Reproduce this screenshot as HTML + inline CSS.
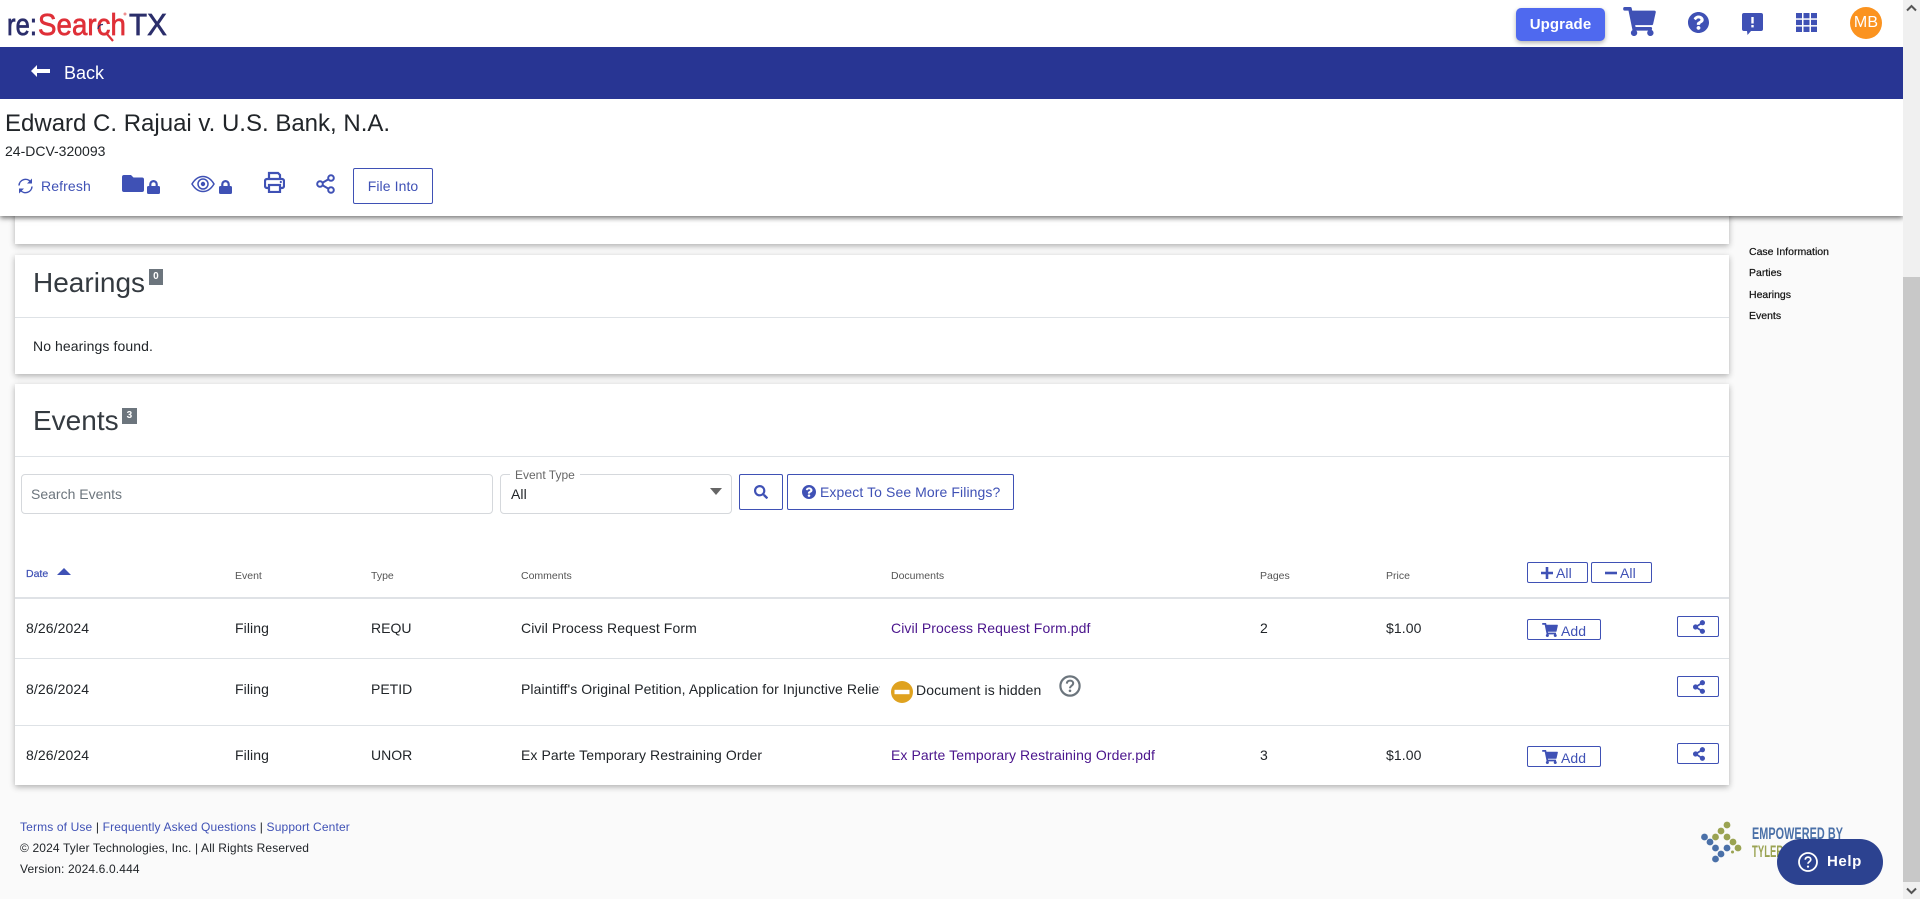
<!DOCTYPE html>
<html lang="en">
<head>
<meta charset="utf-8">
<title>re:SearchTX</title>
<style>
html,body{margin:0;padding:0;width:1920px;height:899px;overflow:hidden;background:#fafafa;font-family:"Liberation Sans",Arial,sans-serif;color:#212529;font-size:14px;letter-spacing:.09px}
div,span,a,svg{position:absolute;display:block}
a{text-decoration:none}
.t{line-height:20px;white-space:nowrap}
.card{background:#fff;left:15px;width:1714px;box-shadow:0 2px 6px rgba(0,0,0,.3)}
.line{left:15px;width:1714px;height:1px;background:#dee2e6}
.btn{box-sizing:border-box;border:1px solid #3f51b5;border-radius:2px;background:#fff;color:#3f51b5}
.th{font-size:10.5px;color:#555;line-height:14px;white-space:nowrap;letter-spacing:0}
.doc{color:#4a148c}
.blue{color:#3f51b5}
.small{font-size:12px;letter-spacing:.14px}
.nav{left:1749px;font-size:10.5px;line-height:14px;color:#111;white-space:nowrap;-webkit-text-stroke:.2px #111;letter-spacing:0}
</style>
</head>
<body>
<!-- right rail nav -->
<span class="nav" style="top:245px">Case Information</span>
<span class="nav" style="top:266px">Parties</span>
<span class="nav" style="top:288px">Hearings</span>
<span class="nav" style="top:309px">Events</span>

<!-- partial card -->
<div class="card" style="top:200px;height:44px"></div>

<!-- Hearings -->
<div class="card" style="top:255px;height:119px"></div>
<div class="t" style="left:33px;top:263px;font-size:28px;line-height:40px;color:#343a40;letter-spacing:0">Hearings</div>
<div style="left:149px;top:269px;width:14px;height:16px;background:#6c757d;color:#fff;font-size:10px;font-weight:bold;text-align:center;line-height:16px">0</div>
<div class="line" style="top:317px"></div>
<div class="t" style="left:33px;top:336px">No hearings found.</div>

<!-- Events -->
<div class="card" style="top:384px;height:401px"></div>
<div class="t" style="left:33px;top:401px;font-size:28px;line-height:40px;color:#343a40;letter-spacing:0">Events</div>
<div style="left:122px;top:408px;width:15px;height:16px;background:#6c757d;color:#fff;font-size:10px;font-weight:bold;text-align:center;line-height:16px">3</div>
<div class="line" style="top:456px"></div>

<div style="left:21px;top:474px;width:472px;height:40px;box-sizing:border-box;border:1px solid #d5d8dc;border-radius:4px"></div>
<div class="t" style="left:31px;top:484px;color:#6c757d;letter-spacing:0">Search Events</div>
<div style="left:500px;top:474px;width:232px;height:40px;box-sizing:border-box;border:1px solid #d5d8dc;border-radius:4px"></div>
<div class="t" style="left:510px;top:465px;padding:0 5px;background:#fff;font-size:12px;color:#666;letter-spacing:0">Event Type</div>
<div class="t" style="left:511px;top:484px">All</div>
<svg style="left:710px;top:488px" width="12" height="7" viewBox="0 0 12 7"><path d="M0 0h12L6 7z" fill="#666"/></svg>

<div class="btn" style="left:739px;top:474px;width:44px;height:36px">
<svg style="left:14px;top:10px" width="14" height="14" viewBox="0 0 512 512"><path fill="#3f51b5" d="M505 442.7L405.3 343c-4.5-4.5-10.6-7-17-7H372c27.6-35.3 44-79.7 44-128C416 93.1 322.9 0 208 0S0 93.1 0 208s93.1 208 208 208c48.3 0 92.7-16.4 128-44v16.3c0 6.4 2.5 12.5 7 17l99.7 99.7c9.4 9.4 24.6 9.4 33.9 0l28.3-28.3c9.4-9.4 9.4-24.6.1-34zM208 336c-70.7 0-128-57.2-128-128 0-70.7 57.2-128 128-128 70.7 0 128 57.2 128 128 0 70.7-57.2 128-128 128z"/></svg>
</div>
<div class="btn" style="left:787px;top:474px;width:227px;height:36px">
<svg style="left:14px;top:10px" width="14" height="14" viewBox="8 8 496 496"><path fill="#3f51b5" d="M504 256c0 136.997-111.043 248-248 248S8 392.997 8 256C8 119.083 119.043 8 256 8s248 111.083 248 248zM262.655 90c-54.497 0-89.255 22.957-116.549 63.758-3.536 5.286-2.353 12.415 2.715 16.258l34.699 26.31c5.205 3.947 12.621 3.008 16.665-2.122 17.864-22.658 30.113-35.797 57.303-35.797 20.429 0 45.698 13.148 45.698 32.958 0 14.976-12.363 22.667-32.534 33.976C247.128 238.528 216 254.941 216 296v4c0 6.627 5.373 12 12 12h56c6.627 0 12-5.373 12-12v-1.333c0-28.462 83.186-29.647 83.186-106.667 0-58.002-60.165-102-116.531-102zM256 338c-25.365 0-46 20.635-46 46 0 25.364 20.635 46 46 46s46-20.636 46-46c0-25.365-20.635-46-46-46z"/></svg>
<span class="t" style="left:32px;top:7px;color:#3f51b5">Expect To See More Filings?</span>
</div>

<!-- table head -->
<a class="th" style="left:26px;top:567px;color:#3f51b5;-webkit-text-stroke:.2px #3f51b5">Date</a>
<svg style="left:57px;top:568px" width="14" height="7" viewBox="0 0 14 7"><path d="M0 7h14L7 0z" fill="#3f51b5"/></svg>
<span class="th" style="left:235px;top:569px">Event</span>
<span class="th" style="left:371px;top:569px">Type</span>
<span class="th" style="left:521px;top:569px">Comments</span>
<span class="th" style="left:891px;top:569px">Documents</span>
<span class="th" style="left:1260px;top:569px">Pages</span>
<span class="th" style="left:1386px;top:569px">Price</span>
<div class="btn" style="left:1527px;top:562px;width:61px;height:21px">
<svg style="left:13px;top:4px" width="12" height="12" viewBox="0 0 12 12"><path d="M6 0v12M0 6h12" stroke="#3f51b5" stroke-width="2.6"/></svg>
<span class="t" style="left:28px;top:0">All</span>
</div>
<div class="btn" style="left:1591px;top:562px;width:61px;height:21px">
<svg style="left:13px;top:4px" width="12" height="12" viewBox="0 0 12 12"><path d="M0 6h12" stroke="#3f51b5" stroke-width="2.6"/></svg>
<span class="t" style="left:28px;top:0">All</span>
</div>
<div class="line" style="top:597px;height:2px;background:#dfe2e6"></div>

<!-- rows -->
<span class="t" style="left:26px;top:618px">8/26/2024</span>
<span class="t" style="left:235px;top:618px">Filing</span>
<span class="t" style="left:371px;top:618px;letter-spacing:0">REQU</span>
<span class="t" style="left:521px;top:618px">Civil Process Request Form</span>
<a class="t doc" style="left:891px;top:618px">Civil Process Request Form.pdf</a>
<span class="t" style="left:1260px;top:618px">2</span>
<span class="t" style="left:1386px;top:618px">$1.00</span>
<div class="btn" style="left:1527px;top:619px;width:74px;height:21px">
<svg style="left:14px;top:3px" width="16" height="14" viewBox="0 0 576 512"><path fill="#3f51b5" d="M528.12 301.319l47.273-208C578.806 78.301 567.391 64 551.99 64H159.208l-9.166-44.81C147.758 8.021 137.93 0 126.529 0H24C10.745 0 0 10.745 0 24v16c0 13.255 10.745 24 24 24h69.883l70.248 343.435C147.325 417.1 136 435.222 136 456c0 30.928 25.072 56 56 56s56-25.072 56-56c0-15.674-6.447-29.835-16.824-40h209.647C430.447 426.165 424 440.326 424 456c0 30.928 25.072 56 56 56s56-25.072 56-56c0-22.172-12.888-41.332-31.579-50.405l5.517-24.276c3.413-15.018-8.002-29.319-23.403-29.319H218.117l-6.545-32h293.145c11.206 0 20.92-7.754 23.403-18.681z"/></svg>
<span class="t" style="left:33px;top:1px">Add</span>
</div>
<div class="btn" style="left:1677px;top:616px;width:42px;height:21px">
<svg style="left:15px;top:3px" width="12" height="14" viewBox="0 0 448 512"><path fill="#3f51b5" d="M352 320c-22.608 0-43.387 7.819-59.79 20.895l-102.486-64.054a96.551 96.551 0 0 0 0-41.683l102.486-64.054C308.613 184.181 329.392 192 352 192c53.019 0 96-42.981 96-96S405.019 0 352 0s-96 42.981-96 96c0 7.158.79 14.13 2.276 20.841L155.79 180.895C139.387 167.819 118.608 160 96 160c-53.019 0-96 42.981-96 96s42.981 96 96 96c22.608 0 43.387-7.819 59.79-20.895l102.486 64.054A96.301 96.301 0 0 0 256 416c0 53.019 42.981 96 96 96s96-42.981 96-96-42.981-96-96-96z"/></svg>
</div>
<div class="line" style="top:658px"></div>

<span class="t" style="left:26px;top:679px">8/26/2024</span>
<span class="t" style="left:235px;top:679px">Filing</span>
<span class="t" style="left:371px;top:679px;letter-spacing:0">PETID</span>
<span class="t" style="left:521px;top:679px;width:359px;overflow:hidden">Plaintiff's Original Petition, Application for Injunctive Relief and Request for Disclosure</span>
<svg style="left:891px;top:681px" width="22" height="22" viewBox="0 0 22 22"><circle cx="11" cy="11" r="11" fill="#dfa21f"/><rect x="3.5" y="8.8" width="15" height="4.4" fill="#fff"/></svg>
<span class="t" style="left:916px;top:680px">Document is hidden</span>
<svg style="left:1059px;top:675px" width="22" height="22" viewBox="0 0 22 22"><circle cx="11" cy="11" r="9.6" fill="none" stroke="#6c757d" stroke-width="2.2"/><path d="M7.8 8.6c.2-2 1.6-3 3.3-3 1.8 0 3.1 1.1 3.1 2.7 0 2.500-3.200 2.400-3.200 4.900" fill="none" stroke="#6c757d" stroke-width="2"/><circle cx="11" cy="15.800" r="1.300" fill="#6c757d"/></svg>
<div class="btn" style="left:1677px;top:676px;width:42px;height:21px">
<svg style="left:15px;top:3px" width="12" height="14" viewBox="0 0 448 512"><path fill="#3f51b5" d="M352 320c-22.608 0-43.387 7.819-59.79 20.895l-102.486-64.054a96.551 96.551 0 0 0 0-41.683l102.486-64.054C308.613 184.181 329.392 192 352 192c53.019 0 96-42.981 96-96S405.019 0 352 0s-96 42.981-96 96c0 7.158.79 14.13 2.276 20.841L155.79 180.895C139.387 167.819 118.608 160 96 160c-53.019 0-96 42.981-96 96s42.981 96 96 96c22.608 0 43.387-7.819 59.79-20.895l102.486 64.054A96.301 96.301 0 0 0 256 416c0 53.019 42.981 96 96 96s96-42.981 96-96-42.981-96-96-96z"/></svg>
</div>
<div class="line" style="top:725px"></div>

<span class="t" style="left:26px;top:745px">8/26/2024</span>
<span class="t" style="left:235px;top:745px">Filing</span>
<span class="t" style="left:371px;top:745px;letter-spacing:0">UNOR</span>
<span class="t" style="left:521px;top:745px">Ex Parte Temporary Restraining Order</span>
<a class="t doc" style="left:891px;top:745px">Ex Parte Temporary Restraining Order.pdf</a>
<span class="t" style="left:1260px;top:745px">3</span>
<span class="t" style="left:1386px;top:745px">$1.00</span>
<div class="btn" style="left:1527px;top:746px;width:74px;height:21px">
<svg style="left:14px;top:3px" width="16" height="14" viewBox="0 0 576 512"><path fill="#3f51b5" d="M528.12 301.319l47.273-208C578.806 78.301 567.391 64 551.99 64H159.208l-9.166-44.81C147.758 8.021 137.93 0 126.529 0H24C10.745 0 0 10.745 0 24v16c0 13.255 10.745 24 24 24h69.883l70.248 343.435C147.325 417.1 136 435.222 136 456c0 30.928 25.072 56 56 56s56-25.072 56-56c0-15.674-6.447-29.835-16.824-40h209.647C430.447 426.165 424 440.326 424 456c0 30.928 25.072 56 56 56s56-25.072 56-56c0-22.172-12.888-41.332-31.579-50.405l5.517-24.276c3.413-15.018-8.002-29.319-23.403-29.319H218.117l-6.545-32h293.145c11.206 0 20.92-7.754 23.403-18.681z"/></svg>
<span class="t" style="left:33px;top:1px">Add</span>
</div>
<div class="btn" style="left:1677px;top:743px;width:42px;height:21px">
<svg style="left:15px;top:3px" width="12" height="14" viewBox="0 0 448 512"><path fill="#3f51b5" d="M352 320c-22.608 0-43.387 7.819-59.79 20.895l-102.486-64.054a96.551 96.551 0 0 0 0-41.683l102.486-64.054C308.613 184.181 329.392 192 352 192c53.019 0 96-42.981 96-96S405.019 0 352 0s-96 42.981-96 96c0 7.158.79 14.13 2.276 20.841L155.79 180.895C139.387 167.819 118.608 160 96 160c-53.019 0-96 42.981-96 96s42.981 96 96 96c22.608 0 43.387-7.819 59.79-20.895l102.486 64.054A96.301 96.301 0 0 0 256 416c0 53.019 42.981 96 96 96s96-42.981 96-96-42.981-96-96-96z"/></svg>
</div>

<!-- footer -->
<div class="t small" style="left:20px;top:817px"><a style="position:static;display:inline;color:#3f51b5">Terms of Use</a> | <a style="position:static;display:inline;color:#3f51b5">Frequently Asked Questions</a> | <a style="position:static;display:inline;color:#3f51b5">Support Center</a></div>
<div class="t small" style="left:20px;top:838px">© 2024 Tyler Technologies, Inc. | All Rights Reserved</div>
<div class="t small" style="left:20px;top:859px">Version: 2024.6.0.444</div>

<!-- empowered logo -->
<svg style="left:1660px;top:810px" width="260" height="89" viewBox="0 0 260 89">
<g fill="#9aa352"><circle cx="67" cy="15" r="3.400"/><circle cx="61" cy="21" r="3.400"/><circle cx="55.500" cy="27" r="3.400"/><circle cx="67" cy="27" r="3.400"/><circle cx="73" cy="32" r="3.400"/><circle cx="78" cy="38" r="3.400"/><circle cx="72.500" cy="42" r="1.500"/></g>
<g fill="#4a70a8"><circle cx="44.500" cy="27" r="3.400"/><circle cx="50" cy="32" r="3.400"/><circle cx="55.500" cy="38" r="3.400"/><circle cx="67" cy="38" r="3.400"/><circle cx="61" cy="44" r="3.400"/><circle cx="55.500" cy="49" r="3.400"/></g>
<text x="92" y="29" font-family="Liberation Sans" font-size="17" font-weight="bold" fill="#4a70a8" textLength="91" lengthAdjust="spacingAndGlyphs">EMPOWERED BY</text>
<text x="92" y="47" font-family="Liberation Sans" font-size="17" font-weight="bold" fill="#9aa352" textLength="60" lengthAdjust="spacingAndGlyphs">TYLER TECH</text>
</svg>

<!-- help button -->
<div style="left:1777px;top:839px;width:106px;height:46px;border-radius:23px;background:#2c4290">
<svg style="left:21px;top:13px" width="20" height="20" viewBox="0 0 20 20"><circle cx="10" cy="10" r="9" fill="none" stroke="#fff" stroke-width="1.800"/><path d="M7.200 7.700c.2-1.700 1.400-2.600 2.900-2.600s2.700 1 2.700 2.400c0 2.200-2.800 2.100-2.800 4.300" fill="none" stroke="#fff" stroke-width="1.700"/><circle cx="10" cy="14.600" r="1.100" fill="#fff"/></svg>
<span class="t" style="left:50px;top:13px;color:#fff;font-weight:bold;font-size:15px;letter-spacing:.6px">Help</span>
</div>

<!-- sticky top -->
<div style="left:0;top:0;width:1903px;height:216px;background:#fff;box-shadow:0 2px 5px rgba(0,0,0,.55)"></div>

<svg style="left:0;top:0" width="180" height="47" viewBox="0 0 180 47">
<text x="7" y="35" font-family="Liberation Sans" font-size="31" fill="#2b2e6b" stroke="#2b2e6b" stroke-width=".7" textLength="30" lengthAdjust="spacingAndGlyphs">re:</text>
<text x="38" y="35" font-family="Liberation Sans" font-size="31" fill="#df3038" stroke="#df3038" stroke-width=".7" textLength="88" lengthAdjust="spacingAndGlyphs">Search</text>
<text x="129" y="35" font-family="Liberation Sans" font-size="31" fill="#2b2e6b" stroke="#2b2e6b" stroke-width=".7" textLength="38" lengthAdjust="spacingAndGlyphs">TX</text>
<path d="M98 29a4.500 4.500 0 0 1 5-4.500" fill="none" stroke="#2b2e6b" stroke-width="1.200"/>
<path d="M107 34l6 7" stroke="#df3038" stroke-width="2.200"/>
<circle cx="125" cy="14" r="1.500" fill="#ee8f8f"/>
</svg>

<div style="left:1516px;top:8px;width:89px;height:33px;background:#4f69ef;border-radius:5px;box-shadow:0 2px 5px rgba(0,0,0,.3);color:#fff;font-weight:bold;font-size:15px;line-height:33px;text-align:center;letter-spacing:.1px">Upgrade</div>

<svg style="left:1623px;top:7px" width="33" height="29" viewBox="0 0 576 512"><path fill="#3f51b5" d="M528.12 301.319l47.273-208C578.806 78.301 567.391 64 551.99 64H159.208l-9.166-44.81C147.758 8.021 137.93 0 126.529 0H24C10.745 0 0 10.745 0 24v16c0 13.255 10.745 24 24 24h69.883l70.248 343.435C147.325 417.1 136 435.222 136 456c0 30.928 25.072 56 56 56s56-25.072 56-56c0-15.674-6.447-29.835-16.824-40h209.647C430.447 426.165 424 440.326 424 456c0 30.928 25.072 56 56 56s56-25.072 56-56c0-22.172-12.888-41.332-31.579-50.405l5.517-24.276c3.413-15.018-8.002-29.319-23.403-29.319H218.117l-6.545-32h293.145c11.206 0 20.92-7.754 23.403-18.681z"/></svg>
<svg style="left:1688px;top:12px" width="21" height="21" viewBox="8 8 496 496"><path fill="#3f51b5" d="M504 256c0 136.997-111.043 248-248 248S8 392.997 8 256C8 119.083 119.043 8 256 8s248 111.083 248 248zM262.655 90c-54.497 0-89.255 22.957-116.549 63.758-3.536 5.286-2.353 12.415 2.715 16.258l34.699 26.31c5.205 3.947 12.621 3.008 16.665-2.122 17.864-22.658 30.113-35.797 57.303-35.797 20.429 0 45.698 13.148 45.698 32.958 0 14.976-12.363 22.667-32.534 33.976C247.128 238.528 216 254.941 216 296v4c0 6.627 5.373 12 12 12h56c6.627 0 12-5.373 12-12v-1.333c0-28.462 83.186-29.647 83.186-106.667 0-58.002-60.165-102-116.531-102zM256 338c-25.365 0-46 20.635-46 46 0 25.364 20.635 46 46 46s46-20.636 46-46c0-25.365-20.635-46-46-46z"/></svg>
<svg style="left:1742px;top:13px" width="21" height="22" viewBox="0 0 21 22"><path fill="#3f51b5" d="M2 0h17a2 2 0 0 1 2 2v14a2 2 0 0 1-2 2H9l-3.500 4-.5-4H2a2 2 0 0 1-2-2V2a2 2 0 0 1 2-2z"/><rect x="9.300" y="4" width="2.400" height="6.500" fill="#fff"/><rect x="9.300" y="12" width="2.400" height="2.400" fill="#fff"/></svg>
<svg style="left:1796px;top:13px" width="21" height="19" viewBox="0 0 21 19"><g fill="#3f51b5"><rect width="6" height="5.300"/><rect x="7.500" width="6" height="5.300"/><rect x="15" width="6" height="5.300"/><rect y="6.800" width="6" height="5.300"/><rect x="7.500" y="6.800" width="6" height="5.300"/><rect x="15" y="6.800" width="6" height="5.300"/><rect y="13.600" width="6" height="5.400"/><rect x="7.500" y="13.600" width="6" height="5.400"/><rect x="15" y="13.600" width="6" height="5.400"/></g></svg>
<div style="left:1850px;top:7px;width:32px;height:32px;border-radius:50%;background:#fb931f;color:#fff;font-size:16px;line-height:32px;text-align:center">MB</div>

<!-- blue bar -->
<div style="left:0;top:47px;width:1903px;height:52px;background:#283593"></div>
<svg style="left:31px;top:65px" width="19" height="12" viewBox="0 0 19 12"><path fill="#fff" d="M6 0v4h13v4H6v4L0 6z"/></svg>
<span class="t" style="left:64px;top:63px;font-size:18px;color:#fff;letter-spacing:0">Back</span>

<div style="left:5px;top:109px;font-size:24px;line-height:30px;white-space:nowrap;letter-spacing:0">Edward C. Rajuai v. U.S. Bank, N.A.</div>
<span class="t" style="left:5px;top:141px;letter-spacing:0">24-DCV-320093</span>

<!-- toolbar -->
<svg style="left:18px;top:178px" width="15" height="16" viewBox="0 0 15 16"><g fill="none" stroke="#3f51b5" stroke-width="1.500"><path d="M1 7.500A6.500 6.500 0 0 1 12.500 3.700"/><path d="M14 8.500A6.500 6.500 0 0 1 2.500 12.300"/></g><path fill="#3f51b5" d="M14 0.500v5h-5zM1 15.500v-5h5z"/></svg>
<span class="t blue" style="left:41px;top:176px;letter-spacing:.12px">Refresh</span>

<svg style="left:122px;top:175px" width="22" height="17" viewBox="0 0 22 17"><path fill="#3f51b5" d="M2 0h7l2.500 2.500H20a2 2 0 0 1 2 2V15a2 2 0 0 1-2 2H2a2 2 0 0 1-2-2V2a2 2 0 0 1 2-2z"/></svg>
<svg style="left:147px;top:180px" width="13" height="14" viewBox="0 0 13 14"><path fill="none" stroke="#3f51b5" stroke-width="2.200" d="M3.300 7V4.300a3.200 3.200 0 0 1 6.400 0V7"/><rect y="6" width="13" height="8" rx="1.500" fill="#3f51b5"/></svg>
<svg style="left:191px;top:175px" width="24" height="18" viewBox="0 0 24 18"><path fill="none" stroke="#3f51b5" stroke-width="1.500" d="M1 9c3-5 7-7.500 11-7.500S20 4 23 9c-3 5-7 7.500-11 7.500S4 14 1 9z"/><circle cx="12" cy="9" r="5" fill="none" stroke="#3f51b5" stroke-width="1.500"/><circle cx="12" cy="9" r="2.200" fill="#3f51b5"/></svg>
<svg style="left:219px;top:180px" width="13" height="14" viewBox="0 0 13 14"><path fill="none" stroke="#3f51b5" stroke-width="2.200" d="M3.300 7V4.300a3.200 3.200 0 0 1 6.400 0V7"/><rect y="6" width="13" height="8" rx="1.500" fill="#3f51b5"/></svg>
<svg style="left:264px;top:171px" width="21" height="22" viewBox="0 0 21 22"><g fill="none" stroke="#3f51b5" stroke-width="2.200"><path d="M5 8V2h9l2 2v4"/><path d="M5 17H3a2 2 0 0 1-2-2V10a2 2 0 0 1 2-2h15a2 2 0 0 1 2 2v5a2 2 0 0 1-2 2h-2"/><rect x="5" y="14" width="11" height="7"/></g><circle cx="16.800" cy="11" r="1.100" fill="#3f51b5"/></svg>
<svg style="left:316px;top:174px" width="19" height="20" viewBox="0 0 19 20"><g fill="none" stroke="#3f51b5" stroke-width="2"><circle cx="15" cy="4" r="2.800"/><circle cx="4" cy="10" r="2.800"/><circle cx="15" cy="16" r="2.800"/><path d="M6.500 8.700l6-3.400M6.500 11.300l6 3.400"/></g></svg>
<div class="btn" style="left:353px;top:168px;width:80px;height:36px;text-align:center;line-height:34px">File Into</div>

<!-- scrollbar -->
<div style="left:1903px;top:0;width:17px;height:899px;background:#f0f0f0"></div>
<div style="left:1903px;top:277px;width:17px;height:605px;background:#c8c8c8"></div>
<svg style="left:1906px;top:4px" width="11" height="8" viewBox="0 0 11 8"><path d="M1 6.500l4.500-4.500 4.500 4.500" fill="none" stroke="#555" stroke-width="2"/></svg>
<svg style="left:1906px;top:887px" width="11" height="8" viewBox="0 0 11 8"><path d="M1 1.500l4.500 4.500 4.500-4.500" fill="none" stroke="#555" stroke-width="2"/></svg>
</body>
</html>
